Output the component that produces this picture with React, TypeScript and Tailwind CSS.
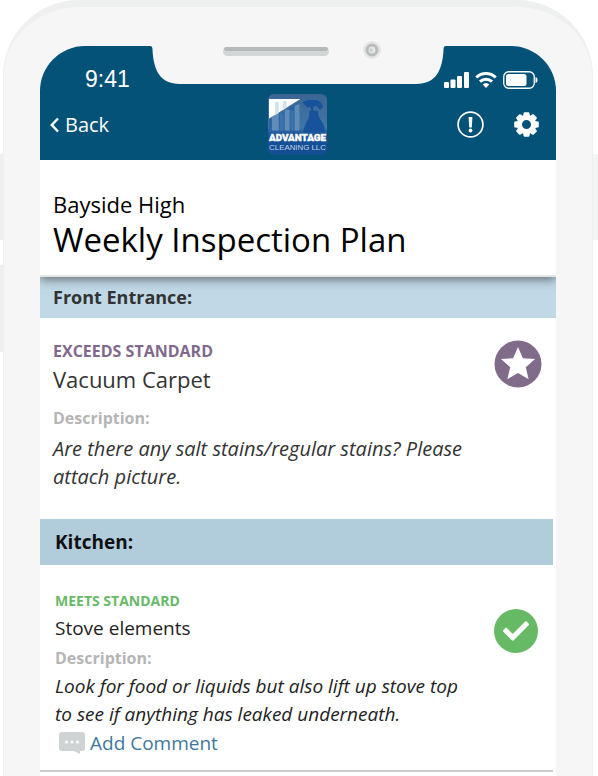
import { FaCheck } from "react-icons/fa";

const gearTeeth = [0, 45, 90, 135, 180, 225, 270, 315];

function SignalIcon() {
  return (
    <svg className="w-[25px] h-4" viewBox="0 0 25 16" fill="white" aria-hidden="true">
      <rect x="0" y="10" width="5" height="6" rx="1" />
      <rect x="6.5" y="7.5" width="5" height="8.5" rx="1" />
      <rect x="13" y="4" width="5" height="12" rx="1" />
      <rect x="20" y="0" width="5" height="16" rx="1" />
    </svg>
  );
}

function WifiIcon() {
  return (
    <svg className="w-[22px] h-4" viewBox="0 0 22 16" fill="none" stroke="white" strokeWidth="3" aria-hidden="true">
      <path d="M1.3 5.5a14 14 0 0 1 19.4 0" />
      <path d="M5 9.6a8.6 8.6 0 0 1 12 0" />
      <path d="M11 16l-3.3-3.4a4.8 4.8 0 0 1 6.6 0z" fill="white" stroke="none" />
    </svg>
  );
}

function BatteryIcon() {
  return (
    <svg className="w-[35px] h-[18px]" viewBox="0 0 35 18" aria-hidden="true">
      <rect x="0.75" y="0.75" width="30.5" height="16.5" rx="5" fill="none" stroke="white" strokeWidth="1.3" />
      <rect x="3" y="3" width="20.5" height="12" rx="2.5" fill="white" />
      <path d="M32.5 6v6c1.6-.5 2-1.7 2-3s-.4-2.5-2-3z" fill="white" />
    </svg>
  );
}

function GearIcon() {
  return (
    <svg className="size-[25px]" viewBox="-12.5 -12.5 25 25" aria-hidden="true">
      {gearTeeth.map((angle) => (
        <path
          key={angle}
          d="M-3.600-8l.7-3.500q.2-.8 1-.8h3.800q.8 0 1 .8l.7 3.500z"
          fill="white"
          transform={`rotate(${angle})`}
        />
      ))}
      <circle r="7" fill="none" stroke="white" strokeWidth="5" />
    </svg>
  );
}

function StarBadge() {
  return (
    <svg className="size-12 shrink-0" viewBox="0 0 48 48" role="img" aria-label="Exceeds standard">
      <circle cx="24" cy="24" r="23.5" fill="#806b8b" />
      <path d="M24 7l4.900 11.200 12.100.9-9.200 8.100 2.800 12L24 33l-10.600 6.200 2.800-12-9.200-8.100 12.100-.9z" fill="white" />
    </svg>
  );
}

function Logo() {
  return (
    <svg className="w-[59px] h-[61px]" viewBox="0 0 60 62" role="img" aria-label="Advantage Cleaning LLC">
      <defs>
        <linearGradient id="logoBg" x1="0" y1="0" x2="0" y2="1">
          <stop offset="0" stopColor="#3a6593" />
          <stop offset="0.55" stopColor="#3f76a8" />
          <stop offset="0.66" stopColor="#17529a" />
          <stop offset="1" stopColor="#124e94" />
        </linearGradient>
      </defs>
      <rect width="60" height="62" rx="6" fill="url(#logoBg)" />
      <path d="M1 26l10-5 20-12v29H1z" fill="#2c64a3" />
      <path d="M4 20l7-4v21H4zM17 16h5v21h-5zM27 12l5-2v27h-5z" fill="#5f8cb8" />
      <path d="M12 20h4v17h-4zM23 17h3v20h-3z" fill="#3c73aa" />
      <path d="M1 5h32L1 25z" fill="white" />
      <path d="M7 8h4v11l-4 2.5zM15 7h4v7l-4 2.5z" fill="#d3e3ee" />
      <path d="M35 8l6-2h9l4 3 2 4-3 3-4-4-3 1v4h5v3c0 6 7 8 7 19H36c1-10 6-13 6-18v-4h2l-1-4-3 1z" fill="#17529a" />
      <text x="30" y="48" textAnchor="middle" fontFamily="Roboto, sans-serif" fontSize="10" fontWeight="900" fill="white" stroke="white" strokeWidth="0.4">ADVANTAGE</text>
      <text x="30" y="57" textAnchor="middle" fontFamily="'Liberation Sans', sans-serif" fontSize="8" fill="#c3d4e6">CLEANING LLC</text>
    </svg>
  );
}

function CommentIcon() {
  return (
    <svg className="w-[26px] h-[22px]" viewBox="0 0 26 22" aria-hidden="true">
      <path d="M3 0h20a3 3 0 0 1 3 3v13a3 3 0 0 1-3 3h-2v3l-6-3H3a3 3 0 0 1-3-3V3a3 3 0 0 1 3-3z" fill="#d0d3d3" />
      <circle cx="7.5" cy="10" r="1.5" fill="white" />
      <circle cx="13" cy="10" r="1.5" fill="white" />
      <circle cx="18.5" cy="10" r="1.5" fill="white" />
    </svg>
  );
}

// Speaker and camera sit on the notch
function Notch() {
  return (
    <div className="absolute inset-x-0 top-0 flex justify-center">
      <svg className="w-[296px] h-[38px] overflow-visible" viewBox="0 0 296 38" aria-hidden="true">
        <path d="M0 0c2 .3 2.500 1 2.500 4C3.500 24 10 38 30 38H266c20 0 26.500-14 27.500-34 0-3 .5-3.700 2.500-4z" fill="#f6f6f6" />
        <rect x="73" y="1" width="106" height="9" rx="4.5" fill="#d3d6d6" />
        <rect x="74" y="1" width="104" height="4" rx="2" fill="#b6b9b9" />
        <circle cx="222" cy="4" r="9" fill="#e4e6e6" />
        <circle cx="222" cy="4" r="5" fill="#e4e6e6" stroke="#b9bcbc" strokeWidth="3" />
        <circle cx="221" cy="4" r="1.5" fill="#c9cccc" />
      </svg>
    </div>
  );
}

export default function App() {
  return (
    <div className="relative min-h-screen overflow-hidden bg-white font-['Open_Sans',sans-serif]">
      {/* Hardware buttons */}
      <div className="absolute left-0 top-[154px] h-[86px] w-[4px] bg-[#eef1f0]" />
      <div className="absolute left-0 top-[265px] h-[87px] w-[4px] bg-[#eef1f0]" />
      <div className="absolute right-0 top-[154px] h-[86px] w-[5px] bg-[#f3f4f4]" />

      <div className="relative ml-[3px] mr-[5px] min-h-screen rounded-t-[76px] border-x border-t-[7px] border-[#eef0f0] bg-[#f6f6f6] px-9 pt-[39px]">
        <div className="min-h-[730px] rounded-t-[46px] bg-white">
          <header className="relative rounded-t-[45px] bg-[#045278] px-[10px] pb-1 pt-5 text-white">
            <Notch />
            <div className="flex h-[27px] items-center justify-between pl-[35px] pr-[8px]">
              <span className="font-['Liberation_Sans',sans-serif] text-[23px] leading-none">9:41</span>
              <div className="flex items-center gap-[6px]">
                <SignalIcon />
                <WifiIcon />
                <BatteryIcon />
              </div>
            </div>
            <div className="grid h-[63px] grid-cols-3 items-center">
              <button type="button" className="flex items-center gap-[6px] justify-self-start text-[20px] leading-7">
                <svg className="h-4 w-[9px]" viewBox="0 0 9 16" fill="none" stroke="white" strokeWidth="2.5" aria-hidden="true">
                  <path d="M8 1.500L1.800 8 8 14.500" />
                </svg>
                Back
              </button>
              <div className="justify-self-center">
                <Logo />
              </div>
              <div className="flex items-center gap-[30px] justify-self-end pr-[7px]">
                <button type="button" aria-label="Alerts">
                  <svg className="size-[27px]" viewBox="0 0 27 27" aria-hidden="true">
                    <circle cx="13.5" cy="13.5" r="12.4" fill="none" stroke="white" strokeWidth="1.7" />
                    <path d="M11.600 6h3.800l-.6 10.500h-2.600z" fill="white" />
                    <circle cx="13.5" cy="19.5" r="1.9" fill="white" />
                  </svg>
                </button>
                <button type="button" aria-label="Settings">
                  <GearIcon />
                </button>
              </div>
            </div>
          </header>

          <main className="overflow-hidden">
            <div className="relative z-10 border-b-2 border-[#e4e7e6] bg-white px-[13px] pb-[15px] pt-[28px] text-black shadow-[0_2px_10px_rgba(80,85,95,0.9)]">
              <p className="text-[22px] leading-8">Bayside High</p>
              <h1 className="text-[33px] leading-10">Weekly Inspection Plan</h1>
            </div>

            <section>
              <h2 className="bg-[#c1d9e7] px-[13px] pb-[7px] pt-[7px] text-[18px] font-bold leading-[27px] text-[#333]">
                Front Entrance:
              </h2>
              <div className="flex items-start justify-between pb-[28px] pl-[13px] pr-[14px] pt-[22px]">
                <div>
                  <p className="text-[16px] font-bold leading-[22px] text-[#80698c]">EXCEEDS STANDARD</p>
                  <h3 className="text-[22px] leading-[34px] text-[#333]">Vacuum Carpet</h3>
                  <p className="mt-[11px] text-[16px] font-bold leading-[22px] text-[#b5b5b5]">Description:</p>
                  <p className="mt-[6px] text-[20px] italic leading-[28px] text-[#333]">
                    Are there any salt stains/regular stains? Please attach picture.
                  </p>
                </div>
                <StarBadge />
              </div>
            </section>

            <section className="mr-[3px] border-b-2 border-[#ccc]">
              <h2 className="bg-[#b1cddc] px-[15px] py-[9px] text-[19px] font-bold leading-[28px] text-[#111]">
                Kitchen:
              </h2>
              <div className="flex items-start justify-between px-[15px] pb-3 pt-[25px]">
                <div className="max-w-[412px]">
                  <p className="text-[14px] font-bold leading-[22px] text-[#68b968]">MEETS STANDARD</p>
                  <h3 className="text-[19px] leading-[32px] text-[#222]">Stove elements</h3>
                  <p className="text-[16px] font-bold leading-7 text-[#b5b5b5]">Description:</p>
                  <p className="text-[19px] font-medium italic leading-[28px] text-[#222]">
                    Look for food or liquids but also lift up stove top to see if anything has leaked underneath.
                  </p>
                  <a href="#comment" className="ml-1 flex items-center gap-[5px] text-[19px] leading-[30px] text-[#40789c]">
                    <CommentIcon />
                    Add Comment
                  </a>
                </div>
                <span className="mt-[19px] flex size-11 shrink-0 items-center justify-center rounded-full bg-[#66b965] text-white">
                  <FaCheck size={26} />
                </span>
              </div>
            </section>
          </main>
        </div>
      </div>
    </div>
  );
}
